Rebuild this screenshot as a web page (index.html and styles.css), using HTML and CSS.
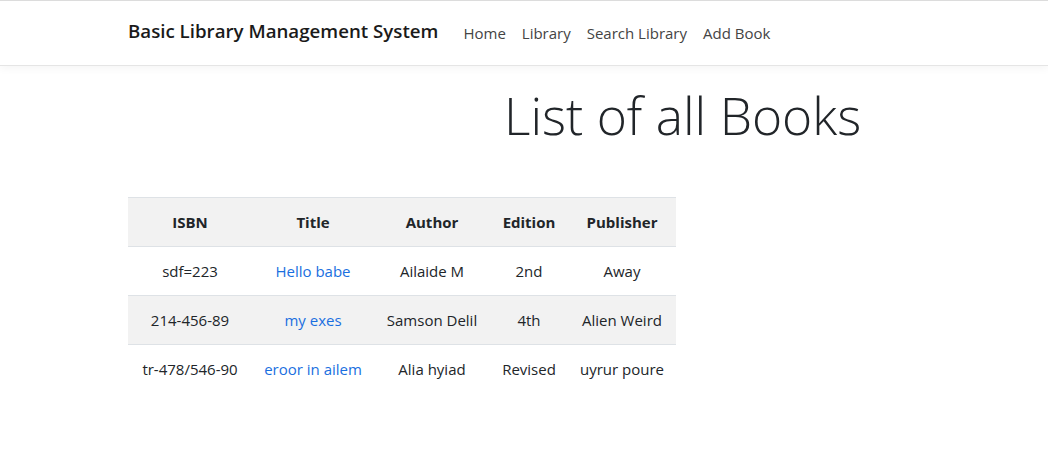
FILE: index.html
```html
<!DOCTYPE html>
<html lang="en">
<head>
<meta charset="utf-8">
<title>Basic Library Management System</title>
<link rel="stylesheet" href="styles.css">
</head>
<body>
<header class="navbar">
  <div class="container nav-inner">
    <a class="brand" href="#">Basic Library Management System</a>
    <nav class="nav-links">
      <a href="#">Home</a>
      <a href="#">Library</a>
      <a href="#">Search Library</a>
      <a href="#">Add Book</a>
    </nav>
  </div>
</header>
<main class="container">
  <h1 class="page-title">List of all Books</h1>
  <table class="books">
    <colgroup>
      <col class="c-isbn"><col class="c-title"><col class="c-author"><col class="c-edition"><col class="c-publisher">
    </colgroup>
    <thead>
      <tr><th>ISBN</th><th>Title</th><th>Author</th><th>Edition</th><th>Publisher</th></tr>
    </thead>
    <tbody>
      <tr><td>sdf=223</td><td><a href="#">Hello babe</a></td><td>Ailaide M</td><td>2nd</td><td>Away</td></tr>
      <tr><td>214-456-89</td><td><a href="#">my exes</a></td><td>Samson Delil</td><td>4th</td><td>Alien Weird</td></tr>
      <tr><td>tr-478/546-90</td><td><a href="#">eroor in ailem</a></td><td>Alia hyiad</td><td>Revised</td><td>uyrur poure</td></tr>
    </tbody>
  </table>
</main>
</body>
</html>
```
FILE: styles.css
```css
* { box-sizing: border-box; }
html, body { margin: 0; padding: 0; }
body {
  font-family: "Open Sans", "Noto Sans", sans-serif;
  font-size: 15px;
  color: #212529;
  background: #fff;
  border-top: 1px solid #dcdcdc;
}
.container {
  width: 792px;
  margin: 0 auto;
}
.navbar {
  height: 65px;
  border-bottom: 1px solid #e5e5e5;
  box-shadow: 0 3px 8px rgba(0,0,0,0.04);
  background: #fff;
}
.nav-inner {
  display: flex;
  align-items: center;
  height: 64px;
}
.brand {
  font-size: 18.7px;
  font-weight: 600;
  color: #1a1a1a;
  text-decoration: none;
  margin-right: 17px;
  position: relative;
  top: -3px;
}
.nav-links { display: flex; }
.nav-links a {
  color: #444;
  text-decoration: none;
  padding: 0 8px;
  font-size: 15px;
}
.page-title {
  font-size: 51.5px;
  font-weight: 300;
  margin: 19px 0 50px 376px;
  line-height: 1.2;
  color: #212529;
}
.books {
  width: 548px;
  border-collapse: collapse;
  table-layout: fixed;
}
.c-isbn { width: 124px; }
.c-title { width: 122px; }
.c-author { width: 116px; }
.c-edition { width: 78px; }
.c-publisher { width: 108px; }
.books th, .books td {
  padding: 12px 0;
  height: 49px;
  text-align: center;
  border-top: 1px solid #dee2e6;
  line-height: 24px;
  white-space: nowrap;
}
.books th { font-weight: 700; }
.books thead tr { background: #f2f2f2; }
.books tbody tr:nth-child(even) { background: #f2f2f2; }
.books a { color: #1a6fe0; text-decoration: none; }
```
